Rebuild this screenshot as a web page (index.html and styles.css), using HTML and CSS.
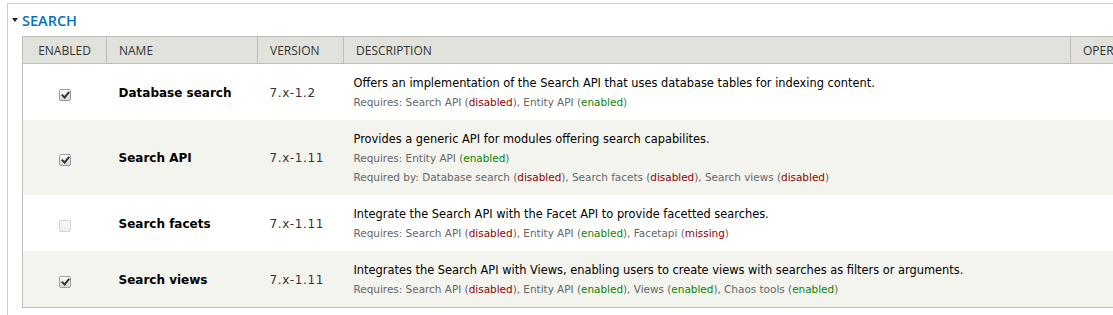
FILE: index.html
```html
<!DOCTYPE html>
<html lang="en">
<head>
    <meta charset="UTF-8">
    <title>Modules - Search</title>
    <link rel="stylesheet" href="styles.css">
</head>
<body>
    <div class="fieldset">
        <div class="legend"><span class="arrow"></span>Search</div>

        <table class="modules">
            <thead>
                <tr>
                    <th class="col-enabled">Enabled</th>
                    <th class="col-name">Name</th>
                    <th class="col-version">Version</th>
                    <th class="col-desc">Description</th>
                    <th class="col-ops">Operations</th>
                </tr>
            </thead>
            <tbody>
                <tr class="odd">
                    <td class="checkbox"><input type="checkbox" checked></td>
                    <td class="name">Database search</td>
                    <td class="version">7.x-1.2</td>
                    <td class="description">
                        <div class="text">Offers an implementation of the Search API that uses database tables for indexing content.</div>
                        <div class="requirements">Requires: Search API (<span class="disabled">disabled</span>), Entity API (<span class="enabled">enabled</span>)</div>
                    </td>
                    <td></td>
                </tr>
                <tr class="even">
                    <td class="checkbox"><input type="checkbox" checked></td>
                    <td class="name">Search API</td>
                    <td class="version">7.x-1.11</td>
                    <td class="description">
                        <div class="text">Provides a generic API for modules offering search capabilites.</div>
                        <div class="requirements">Requires: Entity API (<span class="enabled">enabled</span>)</div>
                        <div class="requirements">Required by: Database search (<span class="disabled">disabled</span>), Search facets (<span class="disabled">disabled</span>), Search views (<span class="disabled">disabled</span>)</div>
                    </td>
                    <td></td>
                </tr>
                <tr class="odd">
                    <td class="checkbox"><input type="checkbox" disabled></td>
                    <td class="name">Search facets</td>
                    <td class="version">7.x-1.11</td>
                    <td class="description">
                        <div class="text">Integrate the Search API with the Facet API to provide facetted searches.</div>
                        <div class="requirements">Requires: Search API (<span class="disabled">disabled</span>), Entity API (<span class="enabled">enabled</span>), Facetapi (<span class="disabled">missing</span>)</div>
                    </td>
                    <td></td>
                </tr>
                <tr class="even">
                    <td class="checkbox"><input type="checkbox" checked></td>
                    <td class="name">Search views</td>
                    <td class="version">7.x-1.11</td>
                    <td class="description">
                        <div class="text">Integrates the Search API with Views, enabling users to create views with searches as filters or arguments.</div>
                        <div class="requirements">Requires: Search API (<span class="disabled">disabled</span>), Entity API (<span class="enabled">enabled</span>), Views (<span class="enabled">enabled</span>), Chaos tools (<span class="enabled">enabled</span>)</div>
                    </td>
                    <td></td>
                </tr>
            </tbody>
        </table>
    </div>
</body>
</html>
```

FILE: styles.css
```css
body {
    margin: 0;
    background-color: #fff;
    font-family: 'DejaVu Sans', Verdana, sans-serif;
    color: #000;
    overflow: hidden;
}

.fieldset {
    margin: 3px 0 0 7px;
    width: 1300px;
    border: 1px solid #ccc;
    padding: 0 0 20px 14px;
}

.legend {
    height: 32px;
    display: flex;
    align-items: center;
    font-family: 'Open Sans', 'Liberation Sans', sans-serif;
    font-size: 14.5px;
    font-weight: 600;
    text-transform: uppercase;
    color: #0074bd;
    margin-left: -10px;
}

.arrow {
    width: 0;
    height: 0;
    border-left: 3px solid transparent;
    border-right: 3px solid transparent;
    border-top: 4px solid #222;
    margin-right: 4px;
}

.modules {
    border-collapse: collapse;
    table-layout: fixed;
    width: 1180px;
    border: 1px solid #bebfb9;
}

.modules th {
    background-color: #e1e2dc;
    font-family: 'Open Sans', 'Liberation Sans', sans-serif;
    font-size: 12px;
    font-weight: normal;
    text-transform: uppercase;
    text-align: left;
    height: 26px;
    padding: 0 12px;
    border: 1px solid #bebfb9;
    color: #333;
    white-space: nowrap;
    overflow: hidden;
}

.modules th.col-enabled {
    text-align: center;
}

.col-enabled { width: 59px; }
.col-name { width: 126px; }
.col-version { width: 61px; }
.col-desc { width: 702px; }

.modules td {
    padding: 9px 12px 8px;
    vertical-align: middle;
}

.modules td.description {
    padding-left: 10px;
}

.modules tr.odd { background-color: #fff; }
.modules tr.even { background-color: #f3f4ee; }

.checkbox {
    text-align: center;
}

.checkbox input {
    appearance: none;
    -webkit-appearance: none;
    position: relative;
    margin: 2px 0 0;
    width: 12px;
    height: 12px;
    border: 1px solid #9a9a9a;
    border-radius: 2px;
    background: linear-gradient(#fdfdfd, #d9d9d9);
    vertical-align: middle;
}

.checkbox input:checked::after {
    content: '';
    position: absolute;
    left: 3px;
    top: 0;
    width: 3px;
    height: 6px;
    border: solid #333;
    border-width: 0 2px 2px 0;
    transform: rotate(40deg);
}

.checkbox input:disabled {
    border-color: #d4d4d4;
    background: linear-gradient(#fafafa, #ededed);
}

.name {
    font-weight: bold;
    font-size: 12px;
}

.version {
    font-size: 12px;
    letter-spacing: 0.6px;
    color: #333;
}

.description .text {
    font-size: 11.4px;
    line-height: 20px;
}

.requirements {
    font-size: 10.45px;
    line-height: 19px;
    color: #666;
}

.disabled { color: #8b0000; }
.enabled { color: #068500; }
```
